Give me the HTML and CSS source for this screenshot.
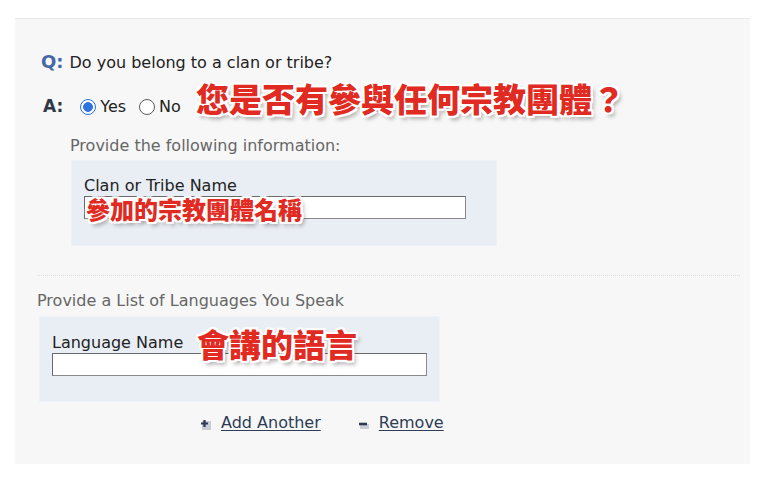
FILE: index.html
```html
<!DOCTYPE html>
<html lang="zh-Hant">
<head>
<meta charset="utf-8">
<title>Clan or Tribe</title>
<link rel="stylesheet" href="styles.css">
</head>
<body>
<div class="panel">
  <div class="q-row">
    <span class="q-mark">Q:</span>
    <span class="q-text">Do you belong to a clan or tribe?</span>
  </div>
  <div class="a-row">
    <span class="a-mark">A:</span>
    <span class="radio checked"></span>
    <span class="radio-label">Yes</span>
    <span class="radio"></span>
    <span class="radio-label">No</span>
    <span class="note note-big">您是否有參與任何宗教團體？</span>
  </div>

  <div class="sub-title">Provide the following information:</div>
  <div class="box box-clan">
    <div class="field-label">Clan or Tribe Name</div>
    <div class="input-wrap">
      <div class="input input-clan"></div>
      <span class="note note-input">參加的宗教團體名稱</span>
    </div>
  </div>

  <div class="divider"></div>

  <div class="list-title">Provide a List of Languages You Speak</div>
  <div class="box box-lang">
    <div class="field-label">Language Name</div>
    <div class="input input-lang"></div>
    <span class="note note-lang">會講的語言</span>
  </div>

  <div class="links">
    <span class="icon icon-plus">
      <svg width="11" height="11" viewBox="0 0 11 11"><rect x="2" y="2" width="9" height="9" fill="#c9ced6"/><path d="M4.5 1v7M1 4.5h7" stroke="#2b3a55" stroke-width="2.2"/></svg>
    </span>
    <a class="link">Add Another</a>
    <span class="icon icon-minus">
      <svg width="11" height="11" viewBox="0 0 11 11"><rect x="2" y="5" width="9" height="5" fill="#c9ced6"/><path d="M1 5h8" stroke="#2b3a55" stroke-width="2.6"/></svg>
    </span>
    <a class="link">Remove</a>
  </div>
</div>
</body>
</html>
```

FILE: styles.css
```css
* { box-sizing: border-box; }

body {
  margin: 0;
  background: #ffffff;
  font-family: "DejaVu Sans", "Noto Sans CJK TC", sans-serif;
  font-size: 16px;
  color: #222;
}

.panel {
  margin: 18px 0 0 15px;
  width: 735px;
  height: 446px;
  background: #f7f7f7;
  border-top: 1px solid #e8e8e8;
  padding: 33px 10px 0 22px;
}

.q-row {
  display: flex;
  align-items: baseline;
  line-height: 20px;
  margin-left: 4px;
}

.q-mark {
  font-weight: bold;
  font-size: 18px;
  color: #4666a6;
  margin-right: 6px;
}

.q-text { color: #222; }

.a-row {
  display: flex;
  align-items: baseline;
  height: 40px;
  margin-top: 9px;
  margin-left: 6px;
  line-height: 20px;
}

.a-mark {
  font-weight: bold;
  font-size: 17px;
  color: #2e3848;
  margin-right: 17px;
}

.radio {
  width: 16px;
  height: 16px;
  border-radius: 50%;
  border: 1px solid #5b5b5b;
  background: #fff;
  align-self: center;
  margin-top: 10px;
  position: relative;
}

.radio.checked {
  border-color: #2f6fd8;
  background: radial-gradient(circle, #2f72e0 0 4.5px, #fff 5.2px);
}

.radio-label {
  margin-left: 4px;
  margin-right: 13px;
  color: #222;
}

.note {
  font-family: "Noto Sans CJK TC", sans-serif;
  font-weight: 900;
  color: #e02a22;
  line-height: 1;
  text-shadow:
    -2px -2px 0 #fff, 2px -2px 0 #fff, -2px 2px 0 #fff, 2px 2px 0 #fff,
    0 -2px 0 #fff, 0 2px 0 #fff, -2px 0 0 #fff, 2px 0 0 #fff,
    3px 4px 4px rgba(0, 0, 0, 0.35);
  white-space: nowrap;
}

.note-big {
  font-size: 33px;
  margin-left: 2px;
}

.sub-title {
  margin: 14px 0 0 33px;
  line-height: 20px;
  color: #666;
}

.box {
  background: #e9eef4;
  border: 1px solid #eef1f5;
}

.box-clan {
  margin: 4px 0 0 34px;
  width: 426px;
  padding: 15px 0 26px 12px;
}

.field-label {
  line-height: 20px;
  color: #222;
}

.input-wrap { position: relative; }

.input {
  height: 23px;
  background: #fff;
  border: 1px solid #8a8a8a;
  border-top-color: #6a6a6a;
  border-left-color: #6a6a6a;
}

.input-clan { width: 382px; }

.note-input {
  position: absolute;
  left: 2px;
  top: 1px;
  font-size: 24px;
}

.divider {
  margin-top: 29px;
  width: 703px;
  border-top: 1px dotted #dcdcdc;
}

.list-title {
  margin-top: 15px;
  line-height: 20px;
  color: #666;
}

.box-lang {
  position: relative;
  margin: 5px 0 0 2px;
  width: 401px;
  padding: 16px 0 25px 12px;
}

.input-lang { width: 375px; }

.note-lang {
  position: absolute;
  left: 157px;
  top: 10px;
  font-size: 32px;
}

.links {
  display: flex;
  align-items: baseline;
  margin: 11px 0 0 163px;
  line-height: 20px;
}

.icon {
  width: 11px;
  height: 11px;
  display: inline-flex;
  align-self: center;
  margin-top: 3px;
}

.link {
  color: #2d3d55;
  text-decoration: underline;
  text-underline-offset: 2px;
  margin-left: 10px;
  margin-right: 37px;
}
```
